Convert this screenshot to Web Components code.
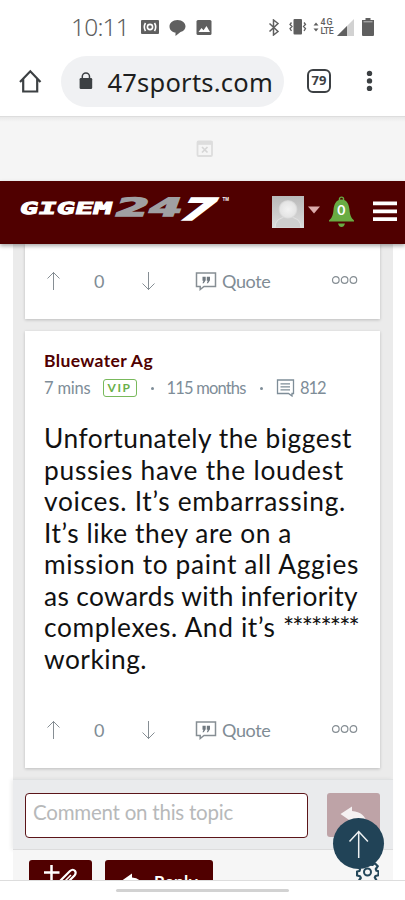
<!DOCTYPE html>
<html lang="en"><head><meta charset="utf-8"><title>GigEm 247</title>
<style>html,body{margin:0;width:405px;height:900px;overflow:hidden;background:#fff;font-family:Lato,"Liberation Sans",sans-serif}</style></head>
<body><app-page></app-page>
<script>
const def=(name,html,setup)=>customElements.define(name,class extends HTMLElement{
  connectedCallback(){if(this.shadowRoot)return;const r=this.attachShadow({mode:'open'});const t=document.createElement('template');t.innerHTML=html;r.append(t.content.cloneNode(true));if(setup)setup(this,r);}
});
/* A single text line whose tracking is tuned to fill the width in "w". */
def('fit-line','<style>:host{display:block;white-space:pre;flex:none}span{display:inline-block}</style><span><slot></slot></span>',(h,r)=>{
  const s=r.querySelector('span'),w=+h.getAttribute('w'),n=h.textContent.length;
  h.style.width=w+'px';
  const f=()=>{s.style.letterSpacing='0';const d=w-s.getBoundingClientRect().width;s.style.letterSpacing=(d/n)+'px'};
  f();requestAnimationFrame(f);
});
def('status-bar',`<style>:host{display:flex;height:54px;box-sizing:border-box;padding:0 31px 0 71px;align-items:center;color:#5f5f5f}
svg{flex:none;display:block;fill:#5f5f5f}fit-line{font:300 24.500px/26px "Noto Sans",sans-serif}.net{margin-left:2px}.net fit-line{font:500 8.800px/8.800px Roboto,sans-serif;height:8.800px}</style>
<fit-line w="58">10:11</fit-line>
<svg style="margin-left:12px" width="18" height="14"><rect width="18" height="14" rx="1"/><g fill="none" stroke="#fff" stroke-width="1.6"><circle cx="9" cy="7" r="2.6"/><path d="M4.500 3q-2.400 4 0 8M13.500 3q2.400 4 0 8"/></g></svg>
<svg style="margin-left:10px" width="17" height="17"><path d="M8.500 1C3.500 1 .5 4 .5 7.500s3 6 6 6V17l5-4c3-.7 5-3 5-5.500C16.500 4 13.500 1 8.500 1z"/></svg>
<svg style="margin-left:10px" width="16" height="15"><rect x=".5" width="15" height="15" rx="1.500"/><path fill="#fff" d="M2.500 12l3-4 2 2.200 3-4.200 3.500 6z"/></svg>
<svg style="margin-left:55.500px" width="12" height="17" viewBox="0 0 12 17"><path fill="none" stroke="#5f5f5f" stroke-width="1.500" d="M1.500 4.500l8.500 8-4.500 3.500V1L10 4.500l-8.500 8"/></svg>
<svg style="margin-left:9px" width="18" height="16"><rect x="4.500" width="8.500" height="15.500" rx="1"/><path fill="none" stroke="#5f5f5f" stroke-width="1.300" d="M2.500 3.500l-1.500 2 2 2-2 2 1.500 2.500M15 3.500l1.500 2-2 2 2 2-1.500 2.500"/></svg>
<svg style="margin-left:6px" width="6" height="10"><path d="M.5 3.500L3 .5l2.500 3zM.5 6.500L3 9.500l2.500-3z"/></svg>
<div class="net"><fit-line w="13">4G</fit-line><fit-line w="13">LTE</fit-line></div>
<svg style="margin-left:3px" width="17" height="17"><path fill="#d2d2d2" d="M17 0v17H0z"/><path d="M10 7v10H0z"/></svg>
<svg style="margin-left:8px" width="12" height="18"><path d="M3.500 0h5v2H12v15q0 1-1 1H1q-1 0-1-1V2h3.500z"/><path fill="#fff" d="M1.500 3.300h9v1h-9z" opacity=".6"/></svg>`);
def('browser-bar',`<style>:host{display:flex;height:63px;box-sizing:border-box;padding-left:19px;padding-bottom:8px;align-items:center;border-bottom:1px solid #ddd}
svg{flex:none;display:block}.pill{margin-left:18px;width:223px;height:51px;border-radius:26px;background:#f0f1f3;display:flex;align-items:center;box-sizing:border-box;padding-left:18px;color:#1d1e20;flex:none}
.u{width:167px;height:36px;margin-left:13px;overflow:hidden;display:flex;justify-content:flex-end}.u fit-line{font:400 25.500px/36px "Noto Sans",sans-serif}.u fit-line{margin-top:1px}
.n{margin-left:23px;width:24px;height:24px;box-sizing:border-box;border:2.500px solid #3c4043;border-radius:6px;font:700 13px/19px "Noto Sans",sans-serif;color:#3c4043;text-align:center;flex:none}</style>
<svg width="24" height="24"><path fill="none" stroke="#3c4043" stroke-width="2.200" d="M1 13L11.300 2.300l10.200 10.700M4.200 10v12.500h14V10"/></svg>
<div class="pill"><svg width="14" height="18"><rect x=".6" y="6" width="12.600" height="11" rx="1.300" fill="#3c4043"/><path d="M3.300 7V4.500a3.600 3.600 0 017.200 0V7" fill="none" stroke="#3c4043" stroke-width="1.500"/></svg><div class="u"><fit-line w="165.500">47sports.com</fit-line></div></div>
<div class="n">79</div>
<svg style="margin-left:35px" width="7" height="22" fill="#3c4043"><circle cx="3.500" cy="3.400" r="2.700"/><circle cx="3.500" cy="10.900" r="2.700"/><circle cx="3.500" cy="18.400" r="2.700"/></svg>`);
def('ad-slot',`<style>:host{display:flex;height:63.500px;background:linear-gradient(#e9e9e9,#f5f5f5 5px);justify-content:center;align-items:center;padding-left:4px;box-sizing:border-box}</style>
<svg width="18" height="18"><rect x="1.500" y="1.500" width="14.500" height="14.500" rx="1" fill="none" stroke="#ddd" stroke-width="1.800"/><path fill="#ddd" d="M1 1h15.500v3.800H1z"/><path stroke="#d6d6d6" stroke-width="1.700" d="M6 7l5.500 5.500M11.500 7L6 12.500"/></svg>`);
def('site-header',`<style>:host{display:flex;height:63.500px;background:#500000;align-items:center;position:relative;z-index:1;box-shadow:0 2px 4px #0005}svg{display:block;flex:none}</style>
<svg width="240" height="63" fill="#fff" font-family="DejaVu Sans,sans-serif" font-weight="700">
<g transform="translate(18.500 32.500) skewX(-14)"><text font-size="16.500" font-family="DejaVu Sans Mono,monospace" stroke="#fff" stroke-width=".9" textLength="92" lengthAdjust="spacingAndGlyphs">GIGEM</text></g>
<g transform="translate(112.500 35) skewX(-20)" fill="#a0a0a3" stroke="#a0a0a3" stroke-width="1.400"><text font-size="25" textLength="67" lengthAdjust="spacingAndGlyphs">24</text></g>
<g transform="translate(176 38.500) skewX(-30)"><text font-size="30" stroke="#fff" stroke-width="1.600" textLength="33" lengthAdjust="spacingAndGlyphs">7</text></g>
<text x="222.500" y="20" font-size="5" font-family="Liberation Sans" textLength="6.500" lengthAdjust="spacingAndGlyphs">TM</text></svg>
<svg style="margin-left:32px" width="32" height="32"><defs><radialGradient id="a"><stop stop-color="#f3f3f3"/><stop offset=".8" stop-color="#e5e5e5"/><stop offset="1" stop-color="#cfcfcf"/></radialGradient><linearGradient id="b" x2="0" y2="1"><stop stop-color="#b9b9b9"/><stop offset="1" stop-color="#ddd"/></linearGradient></defs><path fill="url(#b)" d="M0 0h32v32H0z"/><path fill="#cecece" d="M3 32q0-11 13-11t13 11z" stroke="#ececec" stroke-width=".6"/><circle cx="16" cy="13.500" r="9.600" fill="url(#a)"/></svg>
<svg style="margin-left:4px;margin-top:-5px" width="12" height="8"><path fill="#dbaaaa" d="M0 .5h12L6 7.500z"/></svg>
<svg style="margin-left:9px" width="26" height="32"><circle cx="12.500" cy="3.200" r="2.100" fill="none" stroke="#69ac43" stroke-width="1.400"/><path fill="#69ac43" d="M12.500 3.500c6 0 7.500 5.500 8 10.500.5 6 2 8 4.500 10.500v1H0v-1C2.500 22 4 20 4.500 14c.5-5 2-10.500 8-10.500zM9 27.500h7q-1 3.500-3.500 3.500T9 27.500z"/><text x="12.200" y="18.500" text-anchor="middle" font-family="Lato" font-size="14" font-weight="700" fill="#fff">0</text></svg>
<svg style="margin-left:18px;margin-top:-2px" width="24" height="22" fill="#fff"><path d="M0 1.500h24v3.800H0zM0 9.500h24v3.800H0zM0 17.300h24v3.800H0z"/></svg>`);
def('vote-row',`<style>:host{display:flex;height:24px;align-items:center;padding-left:21px;color:#7f8c95}svg{display:block;flex:none;fill:none;stroke:#868e94}fit-line{font-size:18px;line-height:24px}</style>
<svg width="15" height="20"><path d="M7.500 1v18M1.500 7.500l6-6 6 6"/></svg>
<fit-line style="margin-left:33px" w="11.500">0</fit-line>
<svg style="margin-left:35.500px" width="15" height="20"><path d="M7.500 1v18M1.500 12.500l6 6 6-6"/></svg>
<svg style="margin-left:39px" width="22" height="20" viewBox="0 0 22 20"><path stroke-width="1.500" d="M1.500 2h19v13.500H9L5.200 18.500v-3H1.500z"/><path fill="#707980" stroke="none" d="M7.500 5.800h3.200v3.500l-2 3H7.500l1-2.500h-1zM11.800 5.800H15v3.500l-2 3h-1.200l1-2.500h-1z"/></svg>
<fit-line style="margin-left:5px" w="48.500">Quote</fit-line>
<svg style="margin-left:60px;margin-top:-3px" width="28" height="10"><g stroke-width="1.200"><circle cx="4.800" cy="5" r="3.300"/><circle cx="13.600" cy="5" r="3.300"/><circle cx="22.400" cy="5" r="3.300"/></g></svg>`);
def('post-card',`<style>:host{display:block;box-sizing:border-box;width:355px;background:#fff;margin:0 12px;box-shadow:0 1px 3px #0003}</style><slot></slot>`);
def('post-meta',`<style>:host{display:block;padding:17.500px 19px 0 19px;color:#7e8d98}.row{display:flex;align-items:center;height:24px;margin-top:4px}fit-line{font-size:16.500px;line-height:24px}.name{font:700 17.500px/23px Lato,sans-serif;color:#500000}
.vip{margin-left:12px;width:34px;height:18px;box-sizing:border-box;border:1.500px solid #79b95c;border-radius:3px;color:#6aaf4a;display:flex;justify-content:center;align-items:center}.vip fit-line{font:700 12px/14px Lato,sans-serif}i{width:3px;height:3px;border-radius:50%;background:#7e8d98;margin:2px 13px 0 14px}svg{fill:none;stroke:#7e8d98}</style>
<fit-line class="name" w="109">Bluewater Ag</fit-line><div class="row"><fit-line w="46.500">7 mins</fit-line><div class="vip"><fit-line w="24">VIP</fit-line></div><i></i><fit-line w="79">115 months</fit-line><i></i><svg width="19" height="18"><path stroke-width="1.300" d="M1.500 1h16v13.500H16V17l-3.500-2.500h-11zM4.500 4.800h9.500M4.500 7.800h9.500M4.500 10.800h9.500"/></svg><fit-line style="margin-left:5.500px" w="25.500">812</fit-line></div>`);
def('post-text',`<style>:host{display:block;padding:23.500px 0 0 19px;color:#111;font-size:26.300px;line-height:31.500px}.end{display:flex}</style>
<fit-line w="308">Unfortunately the biggest</fit-line><fit-line w="300">pussies have the loudest</fit-line><fit-line w="302">voices. It’s embarrassing.</fit-line><fit-line w="248">It’s like they are on a</fit-line><fit-line w="315">mission to paint all Aggies</fit-line><fit-line w="314">as cowards with inferiority</fit-line><div class="end"><fit-line w="239">complexes. And it’s </fit-line><fit-line w="75">********</fit-line></div><fit-line w="103">working.</fit-line>`);
def('comment-bar',`<style>:host{display:flex;height:71px;box-sizing:border-box;background:#eaebed;border-top:1px solid #dfe1e2;border-bottom:1px solid #dcdcdd;padding:13px 13px 0 12px;justify-content:space-between;box-shadow:-2px 0 4px #0001}
.in{width:283px;height:45px;box-sizing:border-box;border:1.500px solid #5b1519;border-radius:4px;background:#fff;padding:5px 0 0 7px;color:#b7b9ba}.in fit-line{font-size:20.500px;line-height:26px}.go{width:53px;height:44px;background:#bea3a7;border-radius:3px}svg{display:block}</style>
<div class="in"><fit-line w="200">Comment on this topic</fit-line></div><div class="go"><svg width="53" height="44"><path fill="#f5f1f2" d="M13.500 21L25 13.500V18q13 1 15 13-5-6-15-5v3z"/></svg></div>`);
def('action-bar',`<style>:host{display:flex;height:30px;box-sizing:border-box;background:#f6f6f6;padding:10px 14px 0 16px;overflow:hidden}.b{height:34px;flex:none;background:#500000;border-radius:3px;color:#fff;display:flex}.w{width:63px}.r{width:107.500px;margin-left:13px}fit-line{font:700 17px/20px Lato,sans-serif;margin:11.500px 0 0 12px}svg{display:block;flex:none}</style>
<div class="b w"><svg width="63" height="34" fill="none" stroke="#fff" stroke-width="2.500"><path d="M22.500 5v16M15 12.500h15.500"/><path stroke-width="2.200" d="M31 21l10-10q3-2.500 5 0 1.500 2-.5 4.500L36 25l-6 1z"/><path d="M36 21l6-6" stroke-width="1.500"/></svg></div>
<div class="b r"><svg style="margin-left:17px" width="20" height="34"><path fill="#fff" d="M0 20.500l10-7v4q9 0 10 9-5-4-10-3v3z"/></svg><fit-line w="44">Reply</fit-line></div>
<svg style="margin-left:auto" width="23" height="23"><path fill="none" stroke="#24475a" stroke-width="2.200" stroke-linejoin="round" d="M9 1.200h5l.5 3 1.800.8 2.500-1.800 3 3-2 2.800.7 1.800 2 .5v4l-3 .7-.7 1.500 1.500 2.500-3 3-3-1.500h-5l-3 1.500-3-3L4.800 18 4 16.200l-3-.7v-4l2.500-.5.5-1.800-1.500-2.700 3-3L8 5z"/><circle cx="11.500" cy="12" r="3.500" fill="none" stroke="#24475a" stroke-width="2"/></svg>`);
def('scroll-top',`<style>:host{position:absolute;left:333px;top:818px;width:51px;height:51px;border-radius:50%;background:#214357;z-index:2}svg{display:block}</style><svg width="51" height="51"><path fill="none" stroke="#eef1f3" stroke-width="1.500" d="M25.700 13v27M16.500 23.500l9.200-10 9.200 10"/></svg>`);
def('system-nav',`<style>:host{display:flex;height:20px;box-sizing:border-box;border-top:1px solid #ddd;background:#fff;justify-content:center;padding-top:8px}b{width:173px;height:3px;border-radius:2px;background:#d2d2d2}</style><b></b>`);
def('app-page',`<style>:host{display:block;position:relative;width:405px;height:900px;overflow:hidden;background:#fff}.feed{width:380px;margin-left:13px;background:#ebebeb}.first{height:74.500px;padding-top:25px}.second{height:437px;margin-top:12.500px;margin-bottom:11px}.v{margin-top:43px}</style>
<status-bar></status-bar><browser-bar></browser-bar><ad-slot></ad-slot><site-header></site-header>
<div class="feed"><post-card class="first"><vote-row></vote-row></post-card>
<post-card class="second"><post-meta></post-meta><post-text></post-text><vote-row class="v"></vote-row></post-card>
<comment-bar></comment-bar><action-bar></action-bar></div><system-nav></system-nav><scroll-top></scroll-top>`);
</script></body></html>
